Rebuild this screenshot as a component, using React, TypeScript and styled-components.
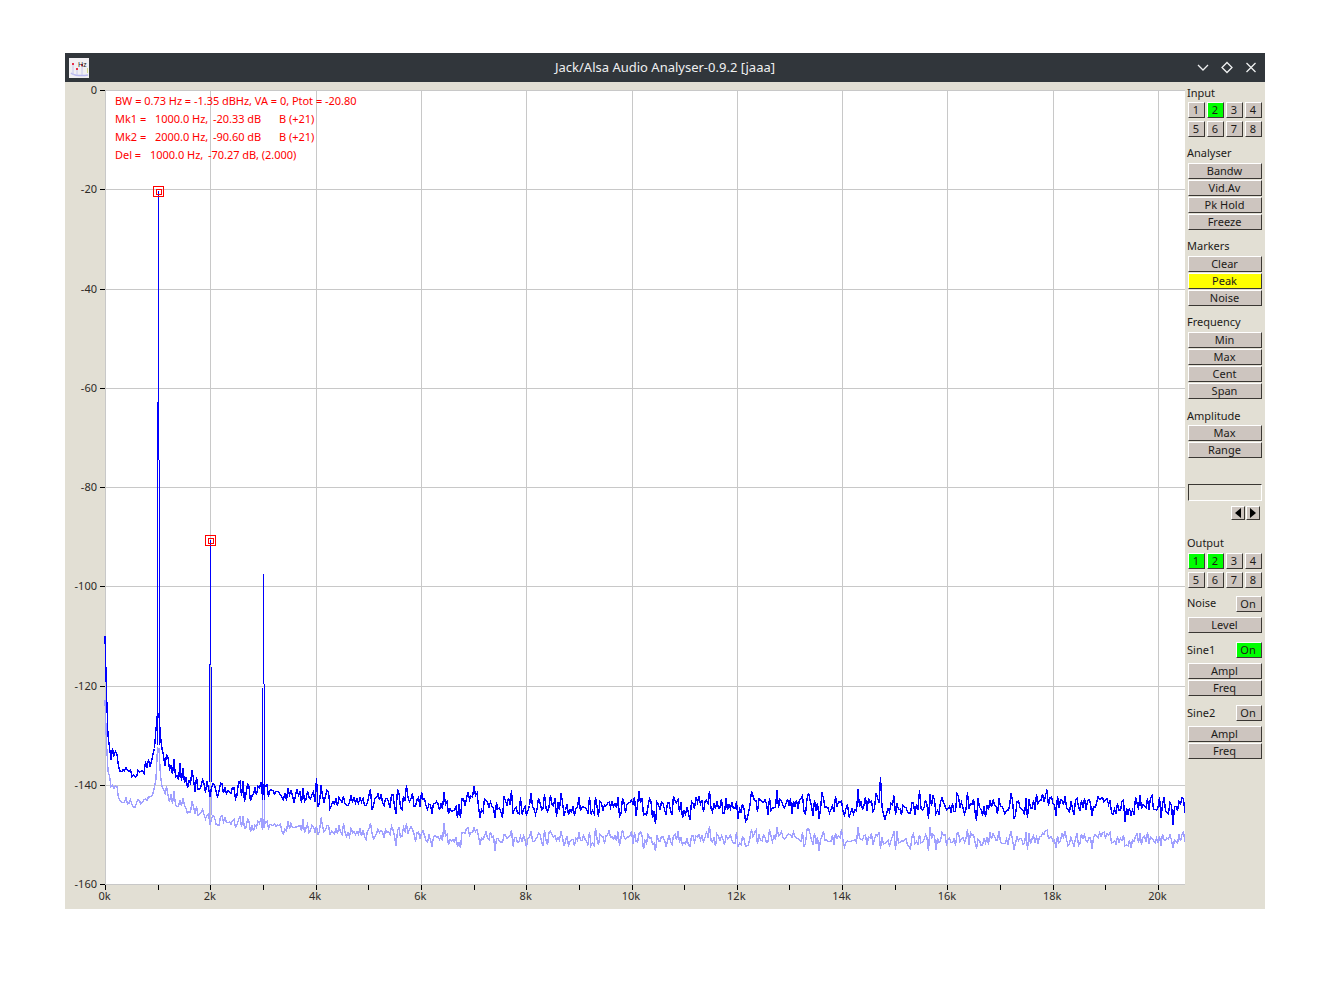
import React from "react";
import styled, { createGlobalStyle } from "styled-components";

const Page = createGlobalStyle`
  html, body { margin: 0; padding: 0; background: #fff; }
  body { font-family: "Noto Sans", "Open Sans", sans-serif; }
`;

const Frame = styled.div`
  width: 1200px;
  height: 856px;
  margin: 53px 0 0 65px;
  display: flex;
  flex-direction: column;
  background: #e2dfd4;
`;

// title bar
const TitleBar = styled.div`
  height: 29px;
  flex: none;
  display: grid;
  grid-template-columns: 120px 1fr 120px;
  align-items: center;
  background: #31363b;
  color: #eff0f1;
`;
const AppIcon = styled.svg`
  display: block;
  margin-left: 4px;
`;
const Title = styled.div`
  text-align: center;
  font-size: 13px;
  line-height: 29px;
`;
const WinButtons = styled.div`
  display: flex;
  justify-content: flex-end;
  gap: 8px;
  padding-right: 6px;
`;
const WinIcon = styled.svg`
  display: block;
  fill: none;
  stroke: #eff0f1;
  stroke-width: 1.3;
`;

const Body = styled.div`
  flex: 1;
  display: flex;
  min-height: 0;
`;

// chart
const Chart = styled.svg`
  display: block;
  flex: none;
`;
const AxisText = styled.text`
  font-family: "Noto Sans", sans-serif;
  font-size: 11px;
  fill: #2e2a26;
`;
const Readout = styled.text`
  font-family: "Noto Sans", sans-serif;
  font-size: 11px;
  letter-spacing: -0.03px;
  fill: #ff0000;
  white-space: pre;
`;

// side panel
const Panel = styled.div`
  width: 80px;
  flex: none;
  box-sizing: border-box;
  padding: 4px 3px 0 3px;
  font-size: 11px;
  color: #1c1a18;
`;
const Label = styled.div<{ $mt?: number }>`
  height: 14px;
  line-height: 14px;
  margin: ${(p) => p.$mt ?? 0}px 0 0 -1px;
`;
const Stack = styled.div<{ $mt?: number }>`
  display: flex;
  flex-direction: column;
  gap: 1px;
  margin-top: ${(p) => p.$mt ?? 3}px;
`;
const NumGrid = styled.div<{ $mt?: number }>`
  display: grid;
  grid-template-columns: repeat(4, 17px);
  column-gap: 2px;
  row-gap: 3px;
  margin-top: ${(p) => p.$mt ?? 3}px;
`;
const Btn = styled.div<{ $bg?: string }>`
  box-sizing: border-box;
  height: 16px;
  line-height: 14px;
  padding-right: 1px;
  text-align: center;
  background: ${(p) => p.$bg ?? "#cdc5bf"};
  border-style: solid;
  border-width: 1px;
  border-color: #fff #3a3733 #3a3733 #fff;
  color: #1c1a18;
`;
const ToggleRow = styled.div<{ $mt: number }>`
  height: 16px;
  display: flex;
  justify-content: space-between;
  align-items: center;
  margin-top: ${(p) => p.$mt}px;
`;
const ToggleName = styled.span<{ $lift: number }>`
  line-height: 14px;
  margin-left: -1px;
  padding-bottom: ${(p) => p.$lift}px;
`;
const Toggle = styled(Btn)`
  width: 26px;
  height: 16px;
  padding-right: 2px;
`;
const SliderBox = styled.div`
  box-sizing: border-box;
  height: 17px;
  margin-top: 26px;
  border-style: solid;
  border-width: 1px;
  border-color: #3a3733 #fff #fff #3a3733;
`;
const ArrowRow = styled.div`
  display: flex;
  justify-content: flex-end;
  gap: 1px;
  margin: 5px 2px 0 0;
`;
const Arrow = styled.div<{ $dir: "left" | "right" }>`
  box-sizing: border-box;
  width: 14px;
  height: 14px;
  display: flex;
  align-items: center;
  justify-content: center;
  background: #cdc5bf;
  border-style: solid;
  border-width: 1px;
  border-color: #fff #3a3733 #3a3733 #fff;
  &::before {
    content: "";
    border-style: solid;
    border-color: transparent;
    border-width: 5px 0;
    ${(p) =>
      p.$dir === "left"
        ? "border-right: 6px solid #000;"
        : "border-left: 6px solid #000;"}
  }
`;

// plot geometry, in page pixels
const X0 = 105;
const X1 = 1185;
const Y0 = 90;
const Y1 = 884;
const PER_K = 52.65;
const DB_ROWS = [90, 189, 289, 388, 487, 586, 686, 785, 884];
const DB_LABELS = ["0", "-20", "-40", "-60", "-80", "-100", "-120", "-140", "-160"];

const mulberry = (seed: number) => () => {
  seed = (seed + 0x6d2b79f5) | 0;
  let t = Math.imul(seed ^ (seed >>> 15), 1 | seed);
  t = (t + Math.imul(t ^ (t >>> 7), 61 | t)) ^ t;
  return ((t ^ (t >>> 14)) >>> 0) / 4294967296;
};

const lerp = (pts: number[][], x: number) => {
  for (let i = 1; i < pts.length; i++) {
    if (x <= pts[i][0]) {
      const [ax, ay] = pts[i - 1];
      const [bx, by] = pts[i];
      return ay + ((by - ay) * (x - ax)) / (bx - ax);
    }
  }
  return pts[pts.length - 1][1];
};

const DARK = [
  [105, 637], [106, 670], [107, 715], [108, 735], [110, 750], [113, 755], [120, 767],
  [130, 775], [145, 772], [150, 765], [155, 745], [157, 715], [159, 715], [161, 745],
  [165, 760], [175, 770], [185, 780], [200, 785], [220, 790], [250, 793], [300, 796],
  [340, 800], [400, 801], [600, 805], [1185, 807],
];
const LIGHT = [
  [105, 700], [106, 735], [108, 770], [112, 785], [120, 800], [130, 804], [145, 802],
  [152, 795], [156, 780], [157, 750], [159, 750], [161, 785], [170, 798], [180, 805],
  [200, 815], [220, 821], [260, 826], [300, 828], [400, 834], [600, 838], [1185, 840],
];

const noiseScale = (x: number) => {
  if (x < 110) return 0.5;
  if (x < 150) return 4.6;
  if (x < 165) return 1.5;
  if (x < 400) return 5.6;
  return 7;
};

const buildTraces = () => {
  const rnd = mulberry(1987);
  const dark: string[] = [];
  const light: string[] = [];
  for (let x = X0; x <= X1; x += 1.5) {
    const n = (rnd() + rnd() + rnd() - 1.5) / 0.5;
    const m = (rnd() + rnd() - 1) / 0.4;
    const scale = noiseScale(x);
    let d = lerp(DARK, x) + n * scale;
    const l = lerp(LIGHT, x) + n * scale * 0.62 + m * scale * 0.4;
    if (Math.abs(x - 881) < 0.8) d = 777;
    if (Math.abs(x - 316) < 0.8) d = 778;
    dark.push(`${x},${d.toFixed(1)}`);
    light.push(`${x},${l.toFixed(1)}`);
  }
  return { dark: dark.join(" "), light: light.join(" ") };
};
const traces = buildTraces();

// x, top, bottom of the vertical bars that make up the tones
const PEAKS = [
  [158, 191, 460], [157, 402, 745], [159, 460, 745],
  [210, 540, 665], [209, 664, 782], [211, 667, 782],
  [263, 574, 684], [262, 688, 800], [264, 684, 800],
];
const LIGHT_PEAKS = [
  [209, 785, 818], [211, 785, 815], [262, 790, 830], [264, 790, 828],
];

const READOUT = [
  { y: 105, parts: [[115, "BW = 0.73 Hz = -1.35 dBHz, VA = 0, Ptot = -20.80"]] },
  { y: 123, parts: [[115, "Mk1 ="], [155, "1000.0 Hz,"], [213, "-20.33 dB"], [279, "B (+21)"]] },
  { y: 141, parts: [[115, "Mk2 ="], [155, "2000.0 Hz,"], [213, "-90.60 dB"], [279, "B (+21)"]] },
  { y: 159, parts: [[115, "Del ="], [150, "1000.0 Hz,"], [208, "-70.27 dB, (2.000)"]] },
] as { y: number; parts: [number, string][] }[];

const Marker = ({ x, y }: { x: number; y: number }) => (
  <g fill="none" stroke="#ff0000" shapeRendering="crispEdges">
    <rect x={x - 4.5} y={y - 4.5} width={10} height={10} />
    <rect x={x - 1.5} y={y - 1.5} width={5} height={5} />
  </g>
);

const Spectrum = () => {
  const ks = Array.from({ length: 21 }, (_, i) => i);
  return (
    <Chart width={1120} height={827} viewBox="65 82 1120 827">
      <rect x={X0} y={Y0} width={X1 - X0} height={Y1 - Y0} fill="#fff" />
      <g stroke="#c8c8c8" shapeRendering="crispEdges">
        {DB_ROWS.map((y) => (
          <line key={y} x1={X0} x2={X1} y1={y + 0.5} y2={y + 0.5} />
        ))}
        {ks
          .filter((k) => k % 2 === 0)
          .map((k) => {
            const x = Math.round(X0 + k * PER_K) + 0.5;
            return <line key={k} x1={x} x2={x} y1={Y0} y2={Y1} />;
          })}
      </g>
      <g stroke="#000" shapeRendering="crispEdges">
        {DB_ROWS.map((y) => (
          <line key={y} x1={100} x2={105} y1={y + 0.5} y2={y + 0.5} />
        ))}
        {ks.map((k) => {
          const x = Math.round(X0 + k * PER_K) + 0.5;
          return <line key={k} x1={x} x2={x} y1={885} y2={890} />;
        })}
      </g>
      {DB_ROWS.map((y, i) => (
        <AxisText key={y} x={97} y={y + 4} textAnchor="end">
          {DB_LABELS[i]}
        </AxisText>
      ))}
      {ks
        .filter((k) => k % 2 === 0)
        .map((k) => (
          <AxisText key={k} x={X0 + k * PER_K - 0.5} y={900} textAnchor="middle">
            {k}k
          </AxisText>
        ))}

      <polyline points={traces.light} fill="none" stroke="#a0a0ff" strokeWidth={1.4} shapeRendering="crispEdges" />
      <g stroke="#a0a0ff" shapeRendering="crispEdges">
        {LIGHT_PEAKS.map(([x, a, b]) => (
          <line key={`${x}-${a}`} x1={x + 0.5} x2={x + 0.5} y1={a} y2={b} />
        ))}
      </g>
      <polyline points={traces.dark} fill="none" stroke="#0000ff" strokeWidth={1.4} shapeRendering="crispEdges" />
      <g stroke="#0000ff" shapeRendering="crispEdges">
        {PEAKS.map(([x, a, b]) => (
          <line key={`${x}-${a}`} x1={x + 0.5} x2={x + 0.5} y1={a} y2={b} />
        ))}
      </g>

      <Marker x={158} y={191} />
      <Marker x={210} y={540} />

      {READOUT.map((row) =>
        row.parts.map(([x, t]) => (
          <Readout key={`${row.y}-${x}`} x={x} y={row.y}>
            {t}
          </Readout>
        )),
      )}
    </Chart>
  );
};

const NumButtons = ({ on, mt }: { on: number[]; mt?: number }) => (
  <NumGrid $mt={mt}>
    {[1, 2, 3, 4, 5, 6, 7, 8].map((n) => (
      <Btn key={n} $bg={on.includes(n) ? "#00ff00" : undefined}>
        {n}
      </Btn>
    ))}
  </NumGrid>
);

const Buttons = ({ names, mt, lit }: { names: string[]; mt?: number; lit?: string }) => (
  <Stack $mt={mt}>
    {names.map((n) => (
      <Btn key={n} $bg={n === lit ? "#ffff00" : undefined}>
        {n}
      </Btn>
    ))}
  </Stack>
);

const SidePanel = () => (
  <Panel>
    <Label>Input</Label>
    <NumButtons on={[2]} mt={2} />
    <Label $mt={9}>Analyser</Label>
    <Buttons names={["Bandw", "Vid.Av", "Pk Hold", "Freeze"]} />
    <Label $mt={9}>Markers</Label>
    <Buttons names={["Clear", "Peak", "Noise"]} lit="Peak" />
    <Label $mt={9}>Frequency</Label>
    <Buttons names={["Min", "Max", "Cent", "Span"]} />
    <Label $mt={10}>Amplitude</Label>
    <Buttons names={["Max", "Range"]} mt={2} />
    <SliderBox />
    <ArrowRow>
      <Arrow $dir="left" />
      <Arrow $dir="right" />
    </ArrowRow>
    <Label $mt={16}>Output</Label>
    <NumButtons on={[1, 2]} />
    <ToggleRow $mt={8}>
      <ToggleName $lift={2}>Noise</ToggleName>
      <Toggle>On</Toggle>
    </ToggleRow>
    <Buttons names={["Level"]} mt={5} />
    <ToggleRow $mt={9}>
      <ToggleName $lift={0}>Sine1</ToggleName>
      <Toggle $bg="#00ff00">On</Toggle>
    </ToggleRow>
    <Buttons names={["Ampl", "Freq"]} mt={5} />
    <ToggleRow $mt={9}>
      <ToggleName $lift={0}>Sine2</ToggleName>
      <Toggle>On</Toggle>
    </ToggleRow>
    <Buttons names={["Ampl", "Freq"]} mt={5} />
  </Panel>
);

export default function App() {
  return (
    <>
      <Page />
      <Frame>
        <TitleBar>
          <AppIcon width={20} height={20} viewBox="0 0 20 20">
            <rect width={20} height={20} fill="#f1eff2" />
            <path d="M2 15c3 3 12 3 17 2" fill="none" stroke="#b9b9f0" strokeWidth={1.5} />
            <path d="M4 6v11M8 11v6M13 7v10" stroke="#c8c8ee" />
            <rect x={3} y={5} width={2} height={2} fill="#e8304a" />
            <rect x={7} y={10} width={2} height={2} fill="#e8304a" />
            <rect x={12} y={6} width={2} height={2} fill="#e8304a" />
            <rect x={18} y={10} width={1} height={5} fill="#cfd88a" />
            <text x={9} y={8.5} fontFamily="Noto Sans" fontSize={7} fill="#222">
              Hz
            </text>
          </AppIcon>
          <Title>Jack/Alsa Audio Analyser-0.9.2 [jaaa]</Title>
          <WinButtons>
            <WinIcon width={16} height={16} viewBox="0 0 16 16">
              <path d="M3 5 8 10 13 5" />
            </WinIcon>
            <WinIcon width={16} height={16} viewBox="0 0 16 16">
              <path d="M8 2.5 13 7.5 8 12.5 3 7.5Z" />
            </WinIcon>
            <WinIcon width={16} height={16} viewBox="0 0 16 16">
              <path d="M3.5 3 12.5 12M12.5 3 3.5 12" />
            </WinIcon>
          </WinButtons>
        </TitleBar>
        <Body>
          <Spectrum />
          <SidePanel />
        </Body>
      </Frame>
    </>
  );
}
